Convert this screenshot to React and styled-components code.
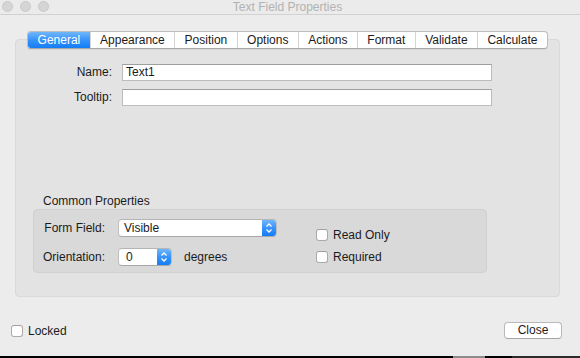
import styled, { createGlobalStyle } from 'styled-components'

const Global = createGlobalStyle`
	body {
		margin: 0;
		font-family: "Liberation Sans", Arial, sans-serif;
		font-size: 12px;
		color: #1b1b1b;
	}
`

const blue = 'linear-gradient(to bottom, #6fb6fb 0%, #3893fa 50%, #137df5 100%)'

const Window = styled.div`
	width: 580px;
	height: 358px;
	background: #ececec;
	display: flex;
	flex-direction: column;
	overflow: hidden;
`
const TitleBar = styled.div`
	height: 14px;
	border-bottom: 1px solid #d2d2d2;
	background: #ebebeb;
	display: grid;
	grid-template-columns: 1fr auto 1fr;
	align-items: start;
`
const Lights = styled.div`
	display: flex;
	gap: 7px;
	padding: 1px 0 0 2px;
`
const Light = styled.span`
	width: 11px;
	height: 11px;
	box-sizing: border-box;
	border-radius: 50%;
	background: #d5d5d5;
	border: 1px solid #c9c9c9;
`
const Title = styled.div`
	color: #b2b2b2;
	line-height: 14px;
	margin-right: 5px;
`
const Main = styled.div`
	padding: 16px 20px 0 15px;
	display: flex;
	flex-direction: column;
`
const TabBar = styled.div`
	align-self: center;
	display: flex;
	height: 18px;
	box-sizing: border-box;
	border: 1px solid #bdbdbd;
	border-bottom-color: #a9a9a9;
	border-radius: 4px;
	background: #fff;
	overflow: hidden;
	margin-bottom: -10px;
	position: relative;
	z-index: 1;
	box-shadow: 0 1px 1px rgba(0, 0, 0, 0.06);
`
const Tab = styled.div`
	padding: 0 9.4px;
	line-height: 16px;
	color: ${(p) => (p.$active ? '#fff' : '#1b1b1b')};
	background: ${(p) => (p.$active ? blue : 'transparent')};
	& + & {
		border-left: 1px solid #d4d4d4;
	}
`
const Panel = styled.div`
	height: 258px;
	box-sizing: border-box;
	background: #e3e3e3;
	border: 1px solid #d9d9d9;
	border-radius: 4px;
	display: flex;
	flex-direction: column;
	padding-top: 24px;
`
const FieldGrid = styled.div`
	display: grid;
	grid-template-columns: 80px 370px;
	column-gap: 10px;
	row-gap: 8px;
	margin-left: 16px;
`
const Label = styled.label`
	text-align: right;
	white-space: nowrap;
	line-height: ${(p) => p.$h || 17}px;
`
const TextInput = styled.div`
	height: 17px;
	box-sizing: border-box;
	background: #fff;
	border: 1px solid #bcbcbc;
	border-top-color: #9f9f9f;
	padding: 0 3px;
	line-height: 15px;
`
const Common = styled.div`
	margin-top: auto;
	padding: 0 72px 23px 17px;
`
const Heading = styled.div`
	line-height: 14px;
	padding-left: 10px;
	margin-bottom: 1px;
`
const GroupBox = styled.div`
	height: 64px;
	box-sizing: border-box;
	background: #d9d9d9;
	border: 1px solid #d0d0d0;
	border-radius: 4px;
	display: flex;
	align-items: flex-start;
	padding: 9px 0 0 9px;
`
const ControlGrid = styled.div`
	display: grid;
	grid-template-columns: 62px auto;
	grid-auto-rows: 18px;
	column-gap: 13px;
	row-gap: 11px;
	align-items: center;
`
const Row = styled.div`
	display: flex;
	align-items: center;
	gap: 12px;
`
const Popup = styled.div`
	width: ${(p) => p.$w}px;
	height: 18px;
	box-sizing: border-box;
	display: flex;
	background: #fff;
	border: 1px solid #c0c0c0;
	border-top-color: #b5b5b5;
	border-bottom-color: #a8a8a8;
	border-radius: 4px;
	overflow: hidden;
`
const PopupText = styled.span`
	flex: 1;
	padding-left: ${(p) => p.$pad || 5}px;
	line-height: 16px;
`
const Arrows = styled.span`
	width: 14px;
	background: ${blue};
	display: flex;
	align-items: center;
	justify-content: center;
`
const Checks = styled.div`
	margin-left: 39px;
	padding-top: 10px;
	display: flex;
	flex-direction: column;
	gap: 10px;
`
const CheckRow = styled.label`
	display: flex;
	align-items: center;
	gap: 5px;
	line-height: 12px;
`
const Box = styled.span`
	width: 12px;
	height: 12px;
	box-sizing: border-box;
	background: #fff;
	border: 1px solid #ababab;
	border-top-color: #a0a0a0;
	border-radius: 3px;
`
const Footer = styled.div`
	height: 59px;
	box-sizing: border-box;
	display: flex;
	align-items: center;
	justify-content: space-between;
	padding: 8px 18px 0 11px;
`
const Button = styled.button`
	width: 58px;
	height: 17px;
	box-sizing: border-box;
	padding: 0;
	background: #fff;
	border: 1px solid #b9b9b9;
	border-bottom-color: #a5a5a5;
	border-radius: 4px;
	font: inherit;
	color: #1b1b1b;
	line-height: 15px;
`
const Desktop = styled.div`
	height: 2px;
	background: linear-gradient(to right, #000 453px, #8c8c8c 453px, #8c8c8c 485px, #000 485px, #000 512px, #2b2b2b 512px);
`

const Chevrons = () => (
	<svg width="8" height="12" viewBox="0 0 8 12">
		<path d="M1.5 4.5 L4 2 L6.5 4.5 M1.5 7.5 L4 10 L6.5 7.5" fill="none" stroke="#fff" strokeWidth="1.3" />
	</svg>
)

const Check = ({ children }) => (
	<CheckRow>
		<Box />
		{children}
	</CheckRow>
)

const tabs = ['General', 'Appearance', 'Position', 'Options', 'Actions', 'Format', 'Validate', 'Calculate']

const App = () => (
	<Window>
		<Global />
		<TitleBar>
			<Lights>
				<Light />
				<Light />
				<Light />
			</Lights>
			<Title>Text Field Properties</Title>
			<div />
		</TitleBar>
		<Main>
			<TabBar>
				{tabs.map((t, i) => (
					<Tab key={t} $active={i === 0}>
						{t}
					</Tab>
				))}
			</TabBar>
			<Panel>
				<FieldGrid>
					<Label>Name:</Label>
					<TextInput>Text1</TextInput>
					<Label>Tooltip:</Label>
					<TextInput />
				</FieldGrid>
				<Common>
					<Heading>Common Properties</Heading>
					<GroupBox>
						<ControlGrid>
							<Label $h={18}>Form Field:</Label>
							<Popup $w={159}>
								<PopupText>Visible</PopupText>
								<Arrows>
									<Chevrons />
								</Arrows>
							</Popup>
							<Label $h={18}>Orientation:</Label>
							<Row>
								<Popup $w={54}>
									<PopupText $pad={7}>0</PopupText>
									<Arrows>
										<Chevrons />
									</Arrows>
								</Popup>
								degrees
							</Row>
						</ControlGrid>
						<Checks>
							<Check>Read Only</Check>
							<Check>Required</Check>
						</Checks>
					</GroupBox>
				</Common>
			</Panel>
		</Main>
		<Footer>
			<Check>Locked</Check>
			<Button>Close</Button>
		</Footer>
		<Desktop />
	</Window>
)

export default App
